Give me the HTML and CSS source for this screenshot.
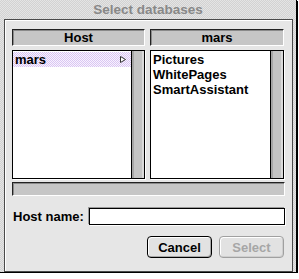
FILE: index.html
```html
<!DOCTYPE html>
<html lang="en">
<head>
    <meta charset="UTF-8">
    <title>Select databases</title>
    <link rel="stylesheet" href="styles.css">
</head>
<body>
    <div class="window">
        <div class="titlebar">Select databases</div>

        <div class="panel">
            <div class="browser">
                <div class="column">
                    <div class="col-header">Host</div>
                    <div class="list">
                        <div class="items">
                            <div class="item selected">
                                <span>mars</span>
                                <svg class="flag" width="8" height="9" viewBox="0 0 8 9">
                                    <path d="M1.5 1.5 L6.5 4.5 L1.5 7.5 Z" fill="#fff" stroke="#333" stroke-width="1"/>
                                </svg>
                            </div>
                        </div>
                        <div class="scrollbar"></div>
                    </div>
                </div>

                <div class="column">
                    <div class="col-header">mars</div>
                    <div class="list">
                        <div class="items">
                            <div class="item">Pictures</div>
                            <div class="item">WhitePages</div>
                            <div class="item">SmartAssistant</div>
                        </div>
                        <div class="scrollbar"></div>
                    </div>
                </div>
            </div>

            <div class="pathbar"></div>

            <div class="host-row">
                <label for="hostName">Host name:</label>
                <input type="text" id="hostName">
            </div>

            <div class="buttons">
                <button type="button" class="btn">Cancel</button>
                <button type="button" class="btn" disabled>Select</button>
            </div>
        </div>
    </div>
</body>
</html>
```

FILE: styles.css
```css
body {
    margin: 0;
    padding: 0;
    background: #fff;
    font-family: 'Liberation Sans', Arial, sans-serif;
    font-weight: bold;
    font-size: 13px;
    color: #000;
}

.window {
    width: 296px;
    height: 272px;
    background-color: #dedede;
    background-image: repeating-conic-gradient(#d2d2d2 0 25%, #e4e4e4 0 50%);
    background-size: 2px 2px;
    border-right: 1px solid #000;
    border-bottom: 1px solid #000;
    box-shadow: 1px 1px 0 #000;
}

.titlebar {
    height: 19px;
    line-height: 19px;
    text-align: center;
    color: #888;
    font-size: 13.5px;
}

.panel {
    margin-left: 4px;
    width: 273px;
    height: 242px;
    padding: 9px 7px 0 7px;
    background: #e6e6e6;
    border: 1px solid #4a4a4a;
    box-shadow: inset 1px 1px 0 #fff;
}

.browser {
    display: grid;
    grid-template-columns: 133px 134px;
    column-gap: 5px;
}

.col-header {
    height: 15px;
    line-height: 15px;
    text-align: center;
    background: #c6c6c6;
    border-top: 1px solid #222;
    border-left: 1px solid #222;
    border-bottom: 1px solid #fff;
    border-right: 1px solid #fff;
    box-shadow: inset 1px 1px 0 #8a8a8a;
}

.list {
    display: flex;
    margin-top: 4px;
    height: 127px;
    border: 1px solid #000;
    box-shadow: 1px 1px 0 #fff;
    background: #fff;
}

.items {
    flex: 1;
    padding-top: 1px;
}

.item {
    height: 15px;
    line-height: 15px;
    padding-left: 2px;
}

.item.selected {
    display: flex;
    justify-content: space-between;
    align-items: center;
    padding-right: 4px;
    background-color: #eadcf8;
    background-image: repeating-conic-gradient(#d9c6f2 0 25%, #f8f2fe 0 50%);
    background-size: 2px 2px;
}

.flag {
    display: block;
}

.scrollbar {
    width: 12px;
    background: #c4c4c4;
    border-left: 1px solid #000;
    box-shadow: inset 2px 0 0 #a6a6a6, inset -2px 0 0 #dadada;
}

.pathbar {
    margin-top: 3px;
    height: 12px;
    background: #c6c6c6;
    border-top: 1px solid #222;
    border-left: 1px solid #222;
    border-bottom: 1px solid #fff;
    border-right: 1px solid #fff;
    box-shadow: inset 1px 1px 0 #8a8a8a;
}

.host-row {
    display: flex;
    align-items: center;
    margin-top: 12px;
    padding-left: 1px;
}

    .host-row label {
        width: 76px;
    }

    .host-row input {
        flex: 1;
        height: 15px;
        margin: 0;
        padding: 0 2px;
        border: 1px solid #000;
        box-shadow: -1px -1px 0 #9a9a9a, 1px 1px 0 #fff;
        font: inherit;
    }

.buttons {
    display: flex;
    justify-content: flex-end;
    gap: 7px;
    margin-top: 11px;
    padding-right: 1px;
}

.btn {
    width: 65px;
    height: 22px;
    padding: 0;
    font: inherit;
    color: #000;
    background: #e2e2e2;
    border: 1px solid #000;
    border-radius: 4px;
    box-shadow: inset 1px 1px 0 #fff, inset -1px -1px 0 #a8a8a8;
}

    .btn:disabled {
        color: #a6a6a6;
        border-color: #a0a0a0;
        box-shadow: inset 1px 1px 0 #fff, inset -1px -1px 0 #cfcfcf;
    }
```
